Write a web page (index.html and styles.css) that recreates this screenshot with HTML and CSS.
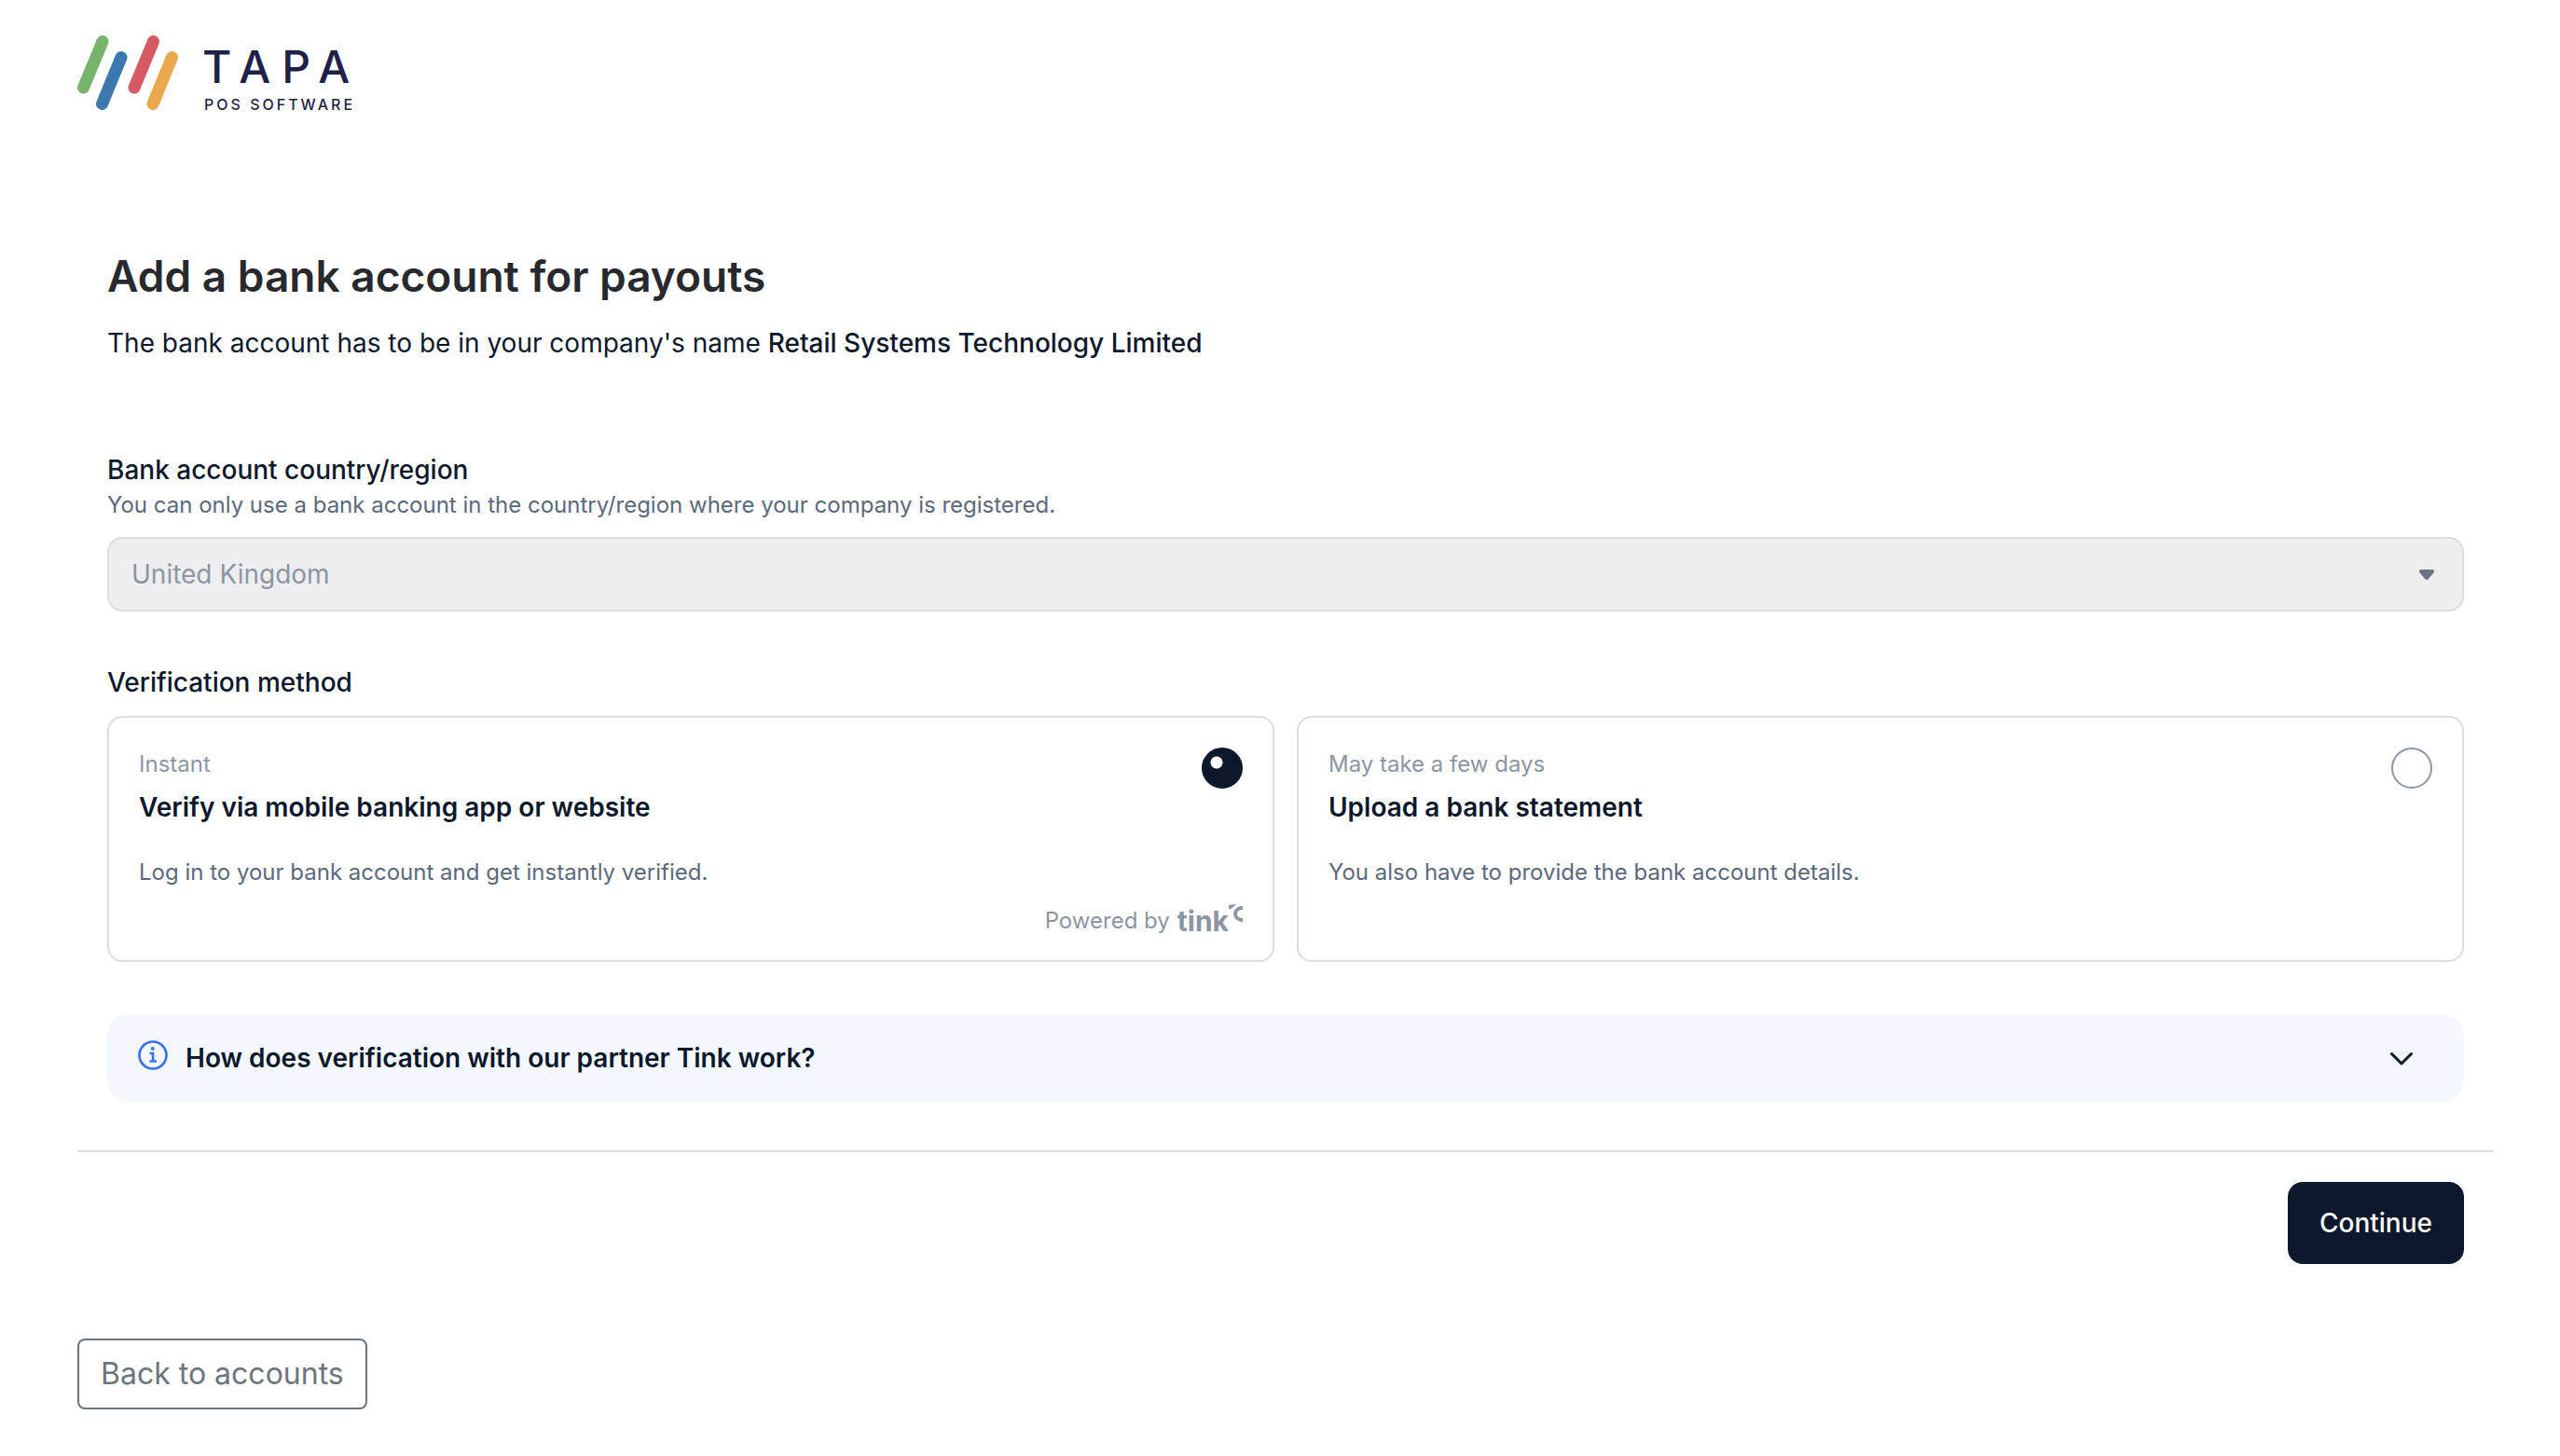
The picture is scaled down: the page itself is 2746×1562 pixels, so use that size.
FILE: index.html
```html
<!DOCTYPE html>
<html lang="en">
<head>
  <meta charset="utf-8">
  <title>Add a bank account for payouts</title>
  <link rel="stylesheet" href="styles.css">
</head>
<body>

  <header class="brand">
    <svg class="brand-mark" width="108" height="80" viewBox="0 0 108 80" fill="none" stroke-width="13" stroke-linecap="round">
      <path d="M27 6.5L6.5 56" stroke="#76b36b"/>
      <path d="M47 23.5L26.5 73.5" stroke="#3b78ad"/>
      <path d="M81.5 6.5L61 56" stroke="#d65a63"/>
      <path d="M101.5 23.5L81 73.5" stroke="#e9a94b"/>
    </svg>
    <div class="brand-text">
      <span class="brand-name">TAPA</span>
      <span class="brand-tag">POS SOFTWARE</span>
    </div>
  </header>

  <form class="bank-form">
    <main class="content">
      <h1>Add a bank account for payouts</h1>
      <p class="intro">The bank account has to be in your company's name <strong>Retail Systems Technology Limited</strong></p>

      <section class="field">
        <label class="field-label" for="country">Bank account country/region</label>
        <p class="hint">You can only use a bank account in the country/region where your company is registered.</p>
        <div class="select-wrap">
          <select id="country" disabled>
            <option>United Kingdom</option>
          </select>
          <svg class="select-arrow" width="16" height="11" viewBox="0 0 16 11">
            <path d="M2 0h12c1.8 0 2.6 1.9 1.5 3.2L10 9.9c-1.1 1.4-2.9 1.4-4 0L.5 3.2C-.6 1.9.2 0 2 0z" fill="#6b7385"/>
          </svg>
        </div>
      </section>

      <fieldset class="methods">
        <legend class="field-label">Verification method</legend>
        <div class="cards">
          <label class="card">
            <span class="card-time">Instant</span>
            <span class="card-title">Verify via mobile banking app or website</span>
            <span class="card-desc">Log in to your bank account and get instantly verified.</span>
            <span class="powered">Powered by
              <span class="tink">tink<svg width="15" height="20" viewBox="0 0 15 20">
                <path d="M0 1.2C2.600 .2 5.500 0 9 .2C6.500 1 4.600 2.600 3.200 4.600L0 5.200z" fill="#8d95a3"/>
                <path d="M15 3.800C10 4.200 7 7 7 10.500C7 14 10 16.800 15 17.200" fill="none" stroke="#8d95a3" stroke-width="4"/>
              </svg></span>
            </span>
            <input type="radio" name="method" value="instant" checked>
          </label>
          <label class="card">
            <span class="card-time">May take a few days</span>
            <span class="card-title">Upload a bank statement</span>
            <span class="card-desc">You also have to provide the bank account details.</span>
            <input type="radio" name="method" value="upload">
          </label>
        </div>
      </fieldset>

      <button type="button" class="info" aria-expanded="false">
        <svg class="info-icon" width="34" height="34" viewBox="0 0 34 34" fill="none" stroke="#3a70ee" stroke-width="2.6">
          <circle cx="17" cy="17" r="14.500"/>
          <path d="M13.500 15h3.600v8.500M13.500 23.500h7.500"/>
          <circle cx="16.800" cy="10" r="2" fill="#3a70ee" stroke="none"/>
        </svg>
        <span class="info-title">How does verification with our partner Tink work?</span>
        <svg class="info-chevron" width="26" height="16" viewBox="0 0 26 16" fill="none" stroke="#0d182c" stroke-width="3" stroke-linecap="round" stroke-linejoin="round">
          <path d="M2.500 3.500L13 14L23.500 3.500"/>
        </svg>
      </button>
    </main>

    <div class="actions">
      <button type="submit" class="continue">Continue</button>
    </div>
  </form>

  <button type="button" class="back">Back to accounts</button>

</body>
</html>
```

FILE: styles.css
```css
* {
  box-sizing: border-box;
}

body {
  margin: 0;
  padding: 38px 71px 50px 83px;
  background-color: #fff;
  color: #0d182c;
  font-family: Inter, "Liberation Sans", sans-serif;
  font-size: 28px;
  line-height: 40px;
}

h1,
p,
fieldset,
legend {
  margin: 0;
  padding: 0;
}

button,
select {
  font-family: inherit;
  font-size: 28px;
  line-height: 40px;
}

.brand {
  display: flex;
  gap: 26px;
  height: 80px;
  margin-bottom: 150px;
  color: #1e2148;
}

.brand-text {
  display: flex;
  flex-direction: column;
  padding-top: 8px;
}

.brand-name {
  font-size: 48px;
  font-weight: 500;
  line-height: 52px;
  letter-spacing: 12px;
}

.brand-tag {
  padding-left: 2px;
  font-size: 16px;
  font-weight: 500;
  line-height: 28px;
  letter-spacing: 3px;
}

.content {
  padding: 0 32px 52px;
}

h1 {
  margin-bottom: 24px;
  color: #28292e;
  font-size: 46px;
  font-weight: 600;
  line-height: 56px;
}

.intro {
  margin-bottom: 96px;
}

.intro strong {
  font-weight: 500;
}

.field {
  margin-bottom: 56px;
}

.field-label {
  display: block;
  font-weight: 500;
}

.hint {
  margin-bottom: 16px;
  color: #5c687c;
  font-size: 24px;
  line-height: 36px;
}

.select-wrap {
  position: relative;
}

select {
  display: block;
  width: 100%;
  height: 80px;
  padding: 0 24px;
  border: 2px solid #dcdce1;
  border-radius: 16px;
  background-color: #eeeef0;
  color: #8d95a3;
  opacity: 1;
  appearance: none;
}

.select-arrow {
  position: absolute;
  top: 35px;
  right: 32px;
}

.methods {
  margin-bottom: 56px;
  border: none;
}

.methods legend {
  margin-bottom: 16px;
}

.cards {
  display: grid;
  grid-template-columns: 1fr 1fr;
  gap: 24px;
}

.card {
  position: relative;
  display: flex;
  flex-direction: column;
  padding: 32px 32px 24px;
  border: 2px solid #dcdce1;
  border-radius: 16px;
  cursor: pointer;
}

.card-time,
.card-desc,
.powered {
  font-size: 24px;
  line-height: 36px;
}

.card-time,
.powered {
  color: #8d95a3;
}

.card-title {
  margin: 8px 0 32px;
  font-weight: 600;
}

.card-desc {
  color: #5c687c;
}

.powered {
  display: flex;
  justify-content: flex-end;
  gap: 8px;
  margin-top: 16px;
}

.tink {
  display: flex;
  font-size: 30px;
  font-weight: 700;
}

.card input {
  position: absolute;
  top: 32px;
  right: 32px;
  width: 44px;
  height: 44px;
  margin: 0;
  border: 2px solid #8d95a3;
  border-radius: 50%;
  background-color: #fff;
  appearance: none;
}

.card input:checked {
  border-color: #0d182c;
  background: radial-gradient(circle at 14px 14px, #fff 6px, #0d182c 7px);
}

.info {
  display: flex;
  align-items: center;
  width: 100%;
  padding: 27px 54px 27px 32px;
  border: none;
  border-radius: 24px;
  background-color: #f3f8ff;
  color: #0d182c;
  text-align: left;
  cursor: pointer;
}

.info-icon {
  align-self: flex-start;
  margin-right: 18px;
}

.info-title {
  flex: 1;
  font-weight: 600;
}

.actions {
  display: flex;
  justify-content: flex-end;
  padding: 32px 32px 0;
  border-top: 2px solid #dcdce1;
}

.continue {
  padding: 24px 34px;
  border: none;
  border-radius: 16px;
  background-color: #0d182c;
  color: #fff;
  font-weight: 500;
  cursor: pointer;
}

.back {
  margin-top: 80px;
  padding: 12px 23px;
  border: 2px solid #6c757d;
  border-radius: 8px;
  background-color: transparent;
  color: #6c757d;
  font-size: 32px;
  line-height: 48px;
  cursor: pointer;
}
```
